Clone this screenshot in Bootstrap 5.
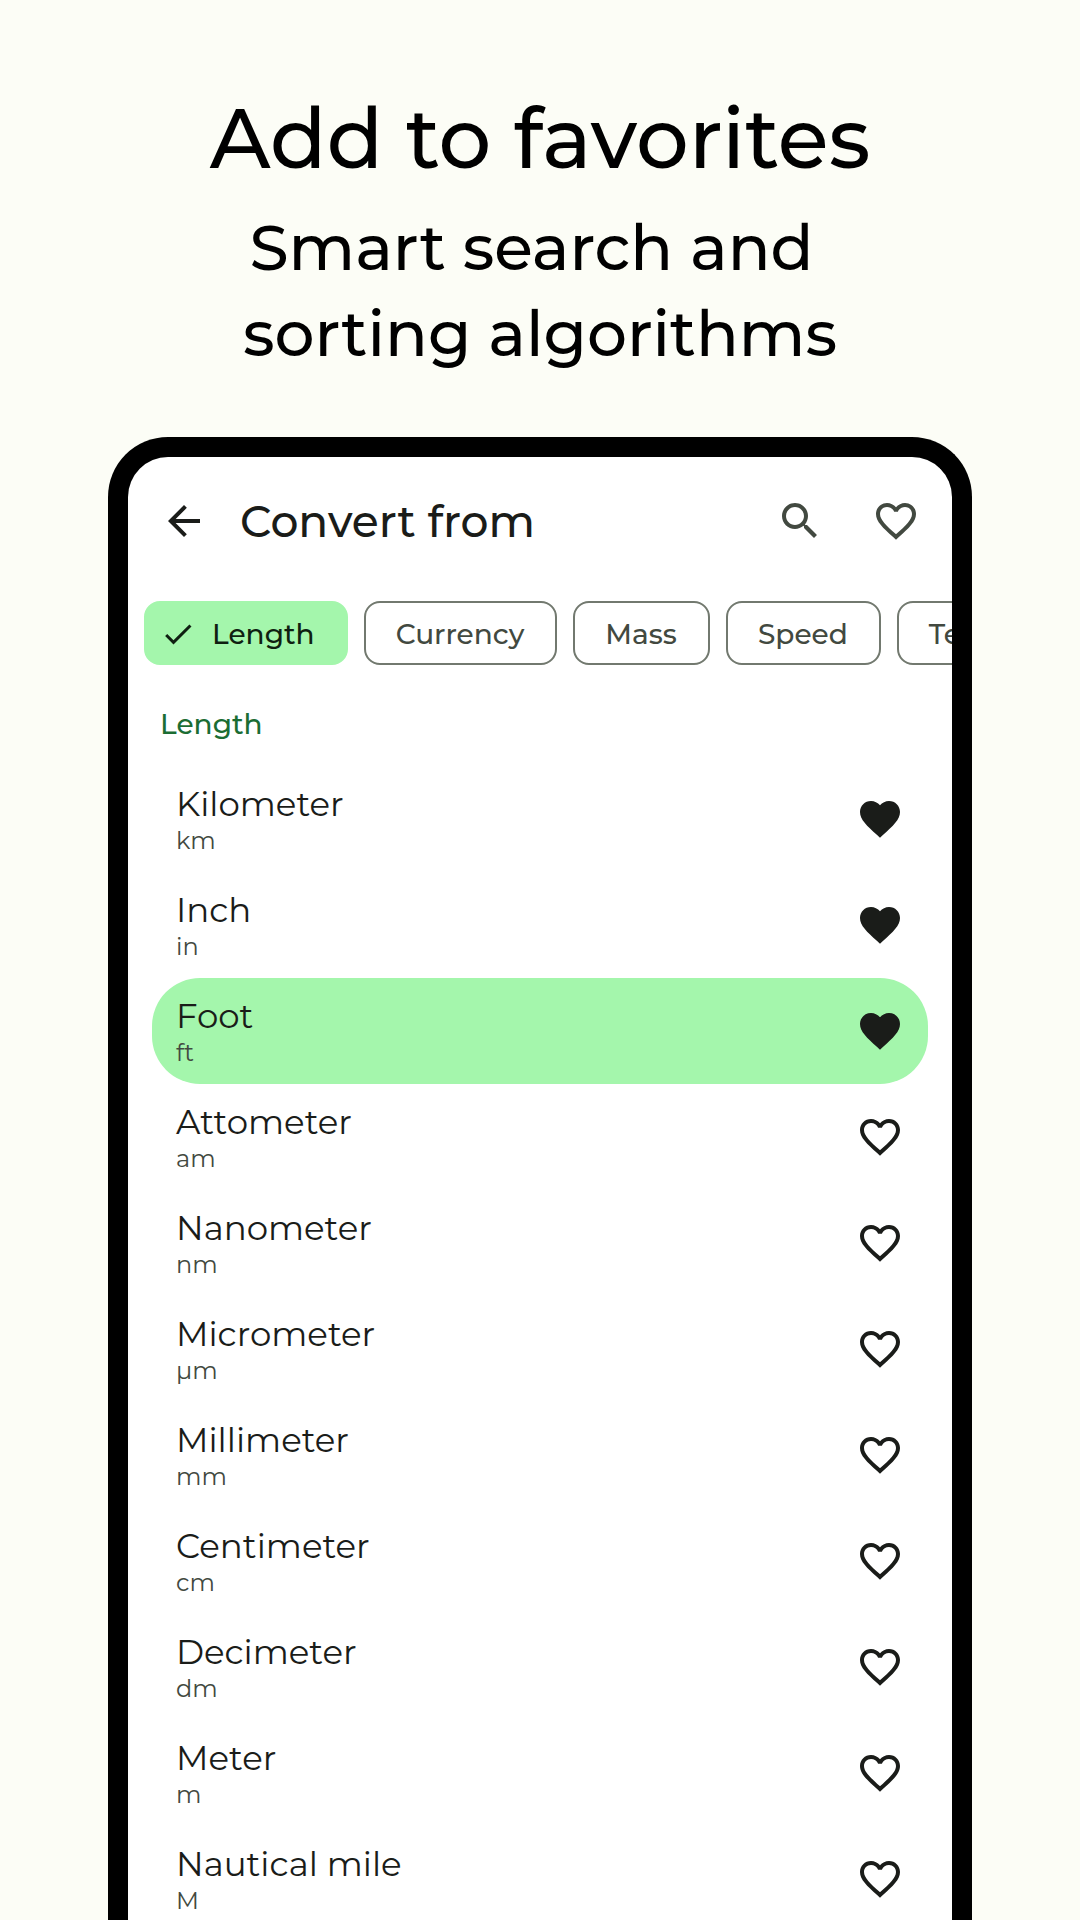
<!DOCTYPE html>
<html lang="en">
<head>
<meta charset="utf-8">
<meta name="viewport" content="width=device-width, initial-scale=1">
<title>Add to favorites</title>
<link href="https://cdn.jsdelivr.net/npm/bootstrap@5.3.0/dist/css/bootstrap.min.css" rel="stylesheet">
<style>
  body { background: #fcfdf6; color: #000; font-family: Montserrat, Inter, "Open Sans", sans-serif; }
  .promo { padding: 85px 24px 0; font-weight: 500; }
  .promo-title { font-size: 83px; line-height: 108px; }
  .promo-text { margin-top: 12px; font-size: 63px; line-height: 86px; }
  .phone { width: 80%; margin-top: 60px; border: 20px solid #000; border-bottom: 0; border-radius: 60px 60px 0 0; background: #fff; color: #1a1c19; }
  .icon { width: 48px; height: 48px; fill: currentColor; display: block; }
  .icon-check { width: 36px; height: 36px; }
  .icon-btn { border: 0; padding: 0; background: none; color: inherit; }
  .muted { color: #424940; }
  .app-bar { height: 128px; padding: 0 32px; }
  .app-title { font-size: 44px; line-height: 52px; }
  .chips { gap: 16px; padding: 16px 0 0 16px; }
  .chip { height: 64px; padding: 2px 31px 0 30px; border: 2px solid #72796f; border-radius: 16px; background: none; font-size: 28px; line-height: 40px; font-weight: 500; color: #424940; white-space: nowrap; flex: none; }
  .chip-on { padding-left: 14px; border-color: #a4f6ac; background: #a4f6ac; color: #0f1f11; }
  .section-name { padding: 39px 32px 0; margin-bottom: 22px; font-size: 28px; line-height: 40px; color: #1b6d33; }
  .units { padding: 0 24px; }
  .unit { height: 106px; padding: 0 24px; border-radius: 48px; }
  .unit-on { background: #a4f6ac; }
  .unit-label { padding-top: 4px; }
  .unit-name { font-size: 34px; line-height: 40px; }
  .unit-sign { font-size: 24px; line-height: 34px; color: #424940; }
</style>
</head>
<body class="vh-100 overflow-hidden d-flex flex-column align-items-center">
<svg class="d-none" aria-hidden="true">
  <symbol id="back" viewBox="0 0 24 24"><path d="M20 11H7.83l5.59-5.59L12 4l-8 8 8 8 1.41-1.41L7.83 13H20v-2z"/></symbol>
  <symbol id="search" viewBox="0 0 24 24"><path d="M15.5 14h-.79l-.28-.27C15.41 12.59 16 11.11 16 9.5 16 5.91 13.09 3 9.5 3S3 5.91 3 9.5 5.91 16 9.5 16c1.61 0 3.09-.59 4.23-1.57l.27.28v.79l5 4.99L20.49 19l-4.99-5zm-6 0C7.01 14 5 11.99 5 9.5S7.01 5 9.5 5 14 7.01 14 9.5 11.99 14 9.5 14z"/></symbol>
  <symbol id="check" viewBox="0 0 24 24"><path d="M9 16.17 4.83 12l-1.42 1.41L9 19 21 7l-1.41-1.41L9 16.17z"/></symbol>
  <symbol id="heart" viewBox="0 0 24 24"><path d="M12 21.35l-1.45-1.32C5.4 15.36 2 12.28 2 8.5 2 5.42 4.42 3 7.5 3c1.74 0 3.41.81 4.5 2.09C13.09 3.81 14.76 3 16.5 3 19.58 3 22 5.42 22 8.5c0 3.78-3.4 6.86-8.55 11.54L12 21.35z"/></symbol>
  <symbol id="heart-line" viewBox="0 0 24 24"><path d="M16.5 3c-1.74 0-3.41.81-4.5 2.09C10.91 3.81 9.24 3 7.5 3 4.42 3 2 5.42 2 8.5c0 3.78 3.4 6.86 8.55 11.54L12 21.35l1.45-1.32C18.6 15.36 22 12.28 22 8.5 22 5.42 19.58 3 16.5 3zm-4.4 15.55l-.1.1-.1-.1C7.14 14.24 4 11.39 4 8.5 4 6.5 5.5 5 7.5 5c1.54 0 3.04.99 3.57 2.36h1.87C13.46 5.99 14.96 5 16.5 5c2 0 3.5 1.5 3.5 3.5 0 2.89-3.14 5.74-7.9 10.05z"/></symbol>
</svg>

<header class="promo text-center">
  <h1 class="promo-title mb-0">Add to favorites</h1>
  <p class="promo-text mb-0">Smart search and&nbsp;<br>sorting algorithms</p>
</header>

<main class="phone flex-grow-1 flex-shrink-0 overflow-hidden">
  <div class="app-bar d-flex align-items-center">
    <button class="icon-btn" type="button" aria-label="Back"><svg class="icon"><use href="#back"/></svg></button>
    <h2 class="app-title mb-0 ms-4 ps-2 flex-grow-1">Convert from</h2>
    <div class="d-flex gap-5 muted">
      <button class="icon-btn" type="button" aria-label="Search"><svg class="icon"><use href="#search"/></svg></button>
      <button class="icon-btn" type="button" aria-label="Favorites"><svg class="icon"><use href="#heart-line"/></svg></button>
    </div>
  </div>

  <div class="chips d-flex overflow-hidden">
    <button class="chip chip-on d-flex align-items-center gap-3" type="button" aria-pressed="true"><svg class="icon icon-check"><use href="#check"/></svg>Length</button>
    <button class="chip" type="button">Currency</button>
    <button class="chip" type="button">Mass</button>
    <button class="chip" type="button">Speed</button>
    <button class="chip" type="button">Temperature</button>
  </div>

  <h3 class="section-name">Length</h3>

  <ul class="units list-unstyled mb-0">
    <li class="unit d-flex align-items-center justify-content-between"><div class="unit-label"><div class="unit-name">Kilometer</div><div class="unit-sign">km</div></div><button class="icon-btn" type="button" aria-label="Kilometer favorite" aria-pressed="true"><svg class="icon"><use href="#heart"/></svg></button></li>
    <li class="unit d-flex align-items-center justify-content-between"><div class="unit-label"><div class="unit-name">Inch</div><div class="unit-sign">in</div></div><button class="icon-btn" type="button" aria-label="Inch favorite" aria-pressed="true"><svg class="icon"><use href="#heart"/></svg></button></li>
    <li class="unit unit-on d-flex align-items-center justify-content-between"><div class="unit-label"><div class="unit-name">Foot</div><div class="unit-sign">ft</div></div><button class="icon-btn" type="button" aria-label="Foot favorite" aria-pressed="true"><svg class="icon"><use href="#heart"/></svg></button></li>
    <li class="unit d-flex align-items-center justify-content-between"><div class="unit-label"><div class="unit-name">Attometer</div><div class="unit-sign">am</div></div><button class="icon-btn" type="button" aria-label="Attometer favorite" aria-pressed="false"><svg class="icon"><use href="#heart-line"/></svg></button></li>
    <li class="unit d-flex align-items-center justify-content-between"><div class="unit-label"><div class="unit-name">Nanometer</div><div class="unit-sign">nm</div></div><button class="icon-btn" type="button" aria-label="Nanometer favorite" aria-pressed="false"><svg class="icon"><use href="#heart-line"/></svg></button></li>
    <li class="unit d-flex align-items-center justify-content-between"><div class="unit-label"><div class="unit-name">Micrometer</div><div class="unit-sign">µm</div></div><button class="icon-btn" type="button" aria-label="Micrometer favorite" aria-pressed="false"><svg class="icon"><use href="#heart-line"/></svg></button></li>
    <li class="unit d-flex align-items-center justify-content-between"><div class="unit-label"><div class="unit-name">Millimeter</div><div class="unit-sign">mm</div></div><button class="icon-btn" type="button" aria-label="Millimeter favorite" aria-pressed="false"><svg class="icon"><use href="#heart-line"/></svg></button></li>
    <li class="unit d-flex align-items-center justify-content-between"><div class="unit-label"><div class="unit-name">Centimeter</div><div class="unit-sign">cm</div></div><button class="icon-btn" type="button" aria-label="Centimeter favorite" aria-pressed="false"><svg class="icon"><use href="#heart-line"/></svg></button></li>
    <li class="unit d-flex align-items-center justify-content-between"><div class="unit-label"><div class="unit-name">Decimeter</div><div class="unit-sign">dm</div></div><button class="icon-btn" type="button" aria-label="Decimeter favorite" aria-pressed="false"><svg class="icon"><use href="#heart-line"/></svg></button></li>
    <li class="unit d-flex align-items-center justify-content-between"><div class="unit-label"><div class="unit-name">Meter</div><div class="unit-sign">m</div></div><button class="icon-btn" type="button" aria-label="Meter favorite" aria-pressed="false"><svg class="icon"><use href="#heart-line"/></svg></button></li>
    <li class="unit d-flex align-items-center justify-content-between"><div class="unit-label"><div class="unit-name">Nautical mile</div><div class="unit-sign">M</div></div><button class="icon-btn" type="button" aria-label="Nautical mile favorite" aria-pressed="false"><svg class="icon"><use href="#heart-line"/></svg></button></li>
  </ul>
</main>
<script src="https://cdn.jsdelivr.net/npm/bootstrap@5.3.0/dist/js/bootstrap.bundle.min.js"></script>
</body>
</html>
